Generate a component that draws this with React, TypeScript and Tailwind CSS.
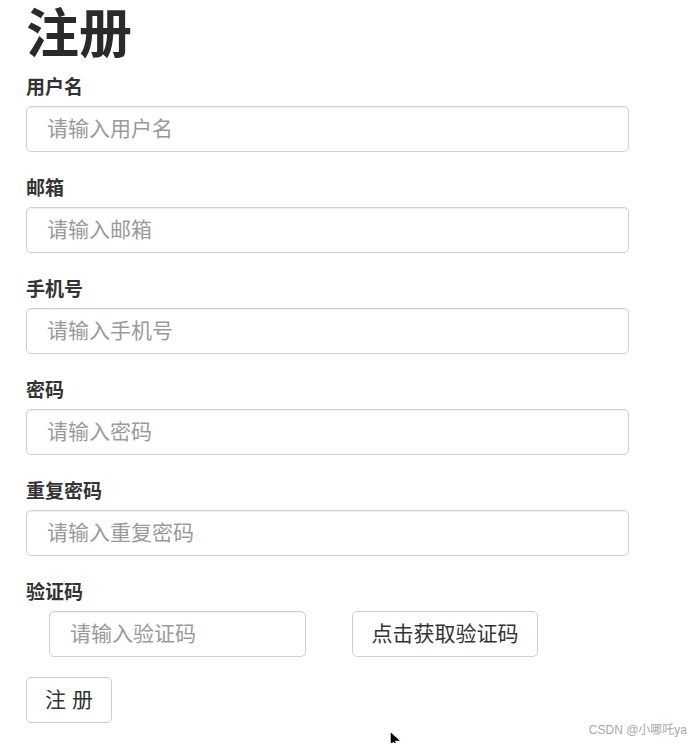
import { useState } from "react";

const FONT = "font-['Helvetica_Neue','Liberation_Sans','Noto_Sans_CJK_SC',sans-serif]";

type FieldDef = {
  id: string;
  label: string;
  placeholder: string;
  type?: string;
};

const FIELDS: FieldDef[] = [
  { id: "username", label: "用户名", placeholder: "请输入用户名" },
  { id: "email", label: "邮箱", placeholder: "请输入邮箱", type: "email" },
  { id: "phone", label: "手机号", placeholder: "请输入手机号" },
  { id: "password", label: "密码", placeholder: "请输入密码", type: "password" },
  { id: "repassword", label: "重复密码", placeholder: "请输入重复密码", type: "password" },
];

const inputCls =
  "h-[46px] rounded-[5px] border border-[#cfcfcf] bg-white px-[20px] text-[21px] text-[#333] shadow-[inset_0_1px_1px_rgba(0,0,0,0.06)] outline-none placeholder:text-[#9a9a9a]";

function Field({ field }: { field: FieldDef }) {
  return (
    <div className="flex flex-col">
      <label htmlFor={field.id} className="block h-[29px] text-[19px] leading-[22px] font-bold text-[#333]">
        {field.label}
      </label>
      <input id={field.id} type={field.type ?? "text"} placeholder={field.placeholder} className={`${inputCls} w-[603px]`} />
    </div>
  );
}

export default function App() {
  const [code, setCode] = useState("");

  return (
    <div className={`relative h-[743px] w-[692px] overflow-hidden bg-white ${FONT}`}>
      <div className="flex flex-col pl-[26px]">
        <h1 className="h-[77px] pt-[5px] text-[53px] leading-[60px] font-bold text-[#2a2a2a]">注册</h1>

        <div className="flex flex-col gap-[26px]">
          {FIELDS.map((f) => (
            <Field key={f.id} field={f} />
          ))}

          {/* captcha */}
          <div className="flex flex-col">
            <label htmlFor="code" className="block h-[29px] text-[19px] leading-[22px] font-bold text-[#333]">
              验证码
            </label>
            <div className="flex items-center pl-[23px]">
              <input
                id="code"
                value={code}
                onChange={(e) => setCode(e.target.value)}
                placeholder="请输入验证码"
                className={`${inputCls} w-[257px]`}
              />
              <button
                type="button"
                className="ml-[46px] h-[46px] w-[186px] rounded-[5px] border border-[#cfcfcf] bg-white text-[21px] text-[#333]"
              >
                点击获取验证码
              </button>
            </div>
          </div>
        </div>

        <div className="mt-[20px]">
          <button
            type="button"
            className="h-[46px] w-[86px] rounded-[5px] border border-[#cfcfcf] bg-white text-[21px] text-[#333]"
          >
            注 册
          </button>
        </div>
      </div>

      {/* mouse cursor */}
      <svg className="absolute left-[389px] top-[730px]" width="18" height="18" viewBox="0 0 16 16">
        <path d="M1 1 L1 14 L4 11 L7 16 L9 15 L6 10 L11 10 Z" fill="#000" stroke="#fff" strokeWidth="1" />
      </svg>

      <div className="absolute right-[5px] top-[721px] text-[12px] text-[#a8a8a8]">CSDN @小哪吒ya</div>
    </div>
  );
}
